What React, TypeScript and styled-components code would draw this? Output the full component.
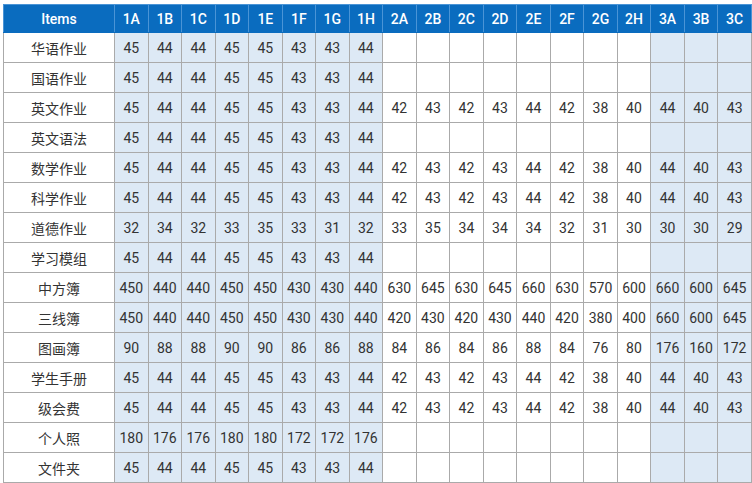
import React from "react";
import styled, { createGlobalStyle } from "styled-components";

const GlobalStyle = createGlobalStyle`
  html, body {
    margin: 0;
    padding: 0;
    background: #ffffff;
  }
  body {
    font-family: Roboto, "Noto Sans CJK SC", sans-serif;
  }
`;

type Row = {
  name: string;
  p1: string[];
  p2?: string[];
  p3?: string[];
};

const classes1 = ["1A", "1B", "1C", "1D", "1E", "1F", "1G", "1H"];
const classes2 = ["2A", "2B", "2C", "2D", "2E", "2F", "2G", "2H"];
const classes3 = ["3A", "3B", "3C"];

const std1 = ["45", "44", "44", "45", "45", "43", "43", "44"];
const std2 = ["42", "43", "42", "43", "44", "42", "38", "40"];
const std3 = ["44", "40", "43"];

const rows: Row[] = [
  { name: "华语作业", p1: std1 },
  { name: "国语作业", p1: std1 },
  { name: "英文作业", p1: std1, p2: std2, p3: std3 },
  { name: "英文语法", p1: std1 },
  { name: "数学作业", p1: std1, p2: std2, p3: std3 },
  { name: "科学作业", p1: std1, p2: std2, p3: std3 },
  {
    name: "道德作业",
    p1: ["32", "34", "32", "33", "35", "33", "31", "32"],
    p2: ["33", "35", "34", "34", "34", "32", "31", "30"],
    p3: ["30", "30", "29"],
  },
  { name: "学习模组", p1: std1 },
  {
    name: "中方簿",
    p1: ["450", "440", "440", "450", "450", "430", "430", "440"],
    p2: ["630", "645", "630", "645", "660", "630", "570", "600"],
    p3: ["660", "600", "645"],
  },
  {
    name: "三线簿",
    p1: ["450", "440", "440", "450", "450", "430", "430", "440"],
    p2: ["420", "430", "420", "430", "440", "420", "380", "400"],
    p3: ["660", "600", "645"],
  },
  {
    name: "图画簿",
    p1: ["90", "88", "88", "90", "90", "86", "86", "88"],
    p2: ["84", "86", "84", "86", "88", "84", "76", "80"],
    p3: ["176", "160", "172"],
  },
  { name: "学生手册", p1: std1, p2: std2, p3: std3 },
  { name: "级会费", p1: std1, p2: std2, p3: std3 },
  {
    name: "个人照",
    p1: ["180", "176", "176", "180", "180", "172", "172", "176"],
  },
  { name: "文件夹", p1: std1 },
];

const blank = (n: number) => Array.from({ length: n }, () => "");

export default function App() {
  return (
    <>
      <GlobalStyle />
      <Page>
        <PriceTable>
          <colgroup>
            <col style={{ width: 111 }} />
            {[...classes1, ...classes2, ...classes3].map((c) => (
              <col key={c} />
            ))}
          </colgroup>
          <thead>
            <tr>
              <HeadCell>Items</HeadCell>
              {[...classes1, ...classes2, ...classes3].map((c) => (
                <HeadCell key={c}>{c}</HeadCell>
              ))}
            </tr>
          </thead>
          <tbody>
            {rows.map((r) => (
              <tr key={r.name}>
                <NameCell>{r.name}</NameCell>
                {r.p1.map((v, i) => (
                  <Cell key={"a" + i} $shade>
                    {v}
                  </Cell>
                ))}
                {(r.p2 || blank(8)).map((v, i) => (
                  <Cell key={"b" + i}>{v}</Cell>
                ))}
                {(r.p3 || blank(3)).map((v, i) => (
                  <Cell key={"c" + i} $shade>
                    {v}
                  </Cell>
                ))}
              </tr>
            ))}
          </tbody>
        </PriceTable>
      </Page>
    </>
  );
}

const Page = styled.div`
  padding: 4px 0 0 3px;
  width: 752px;
  box-sizing: border-box;
`;

const PriceTable = styled.table`
  border-collapse: collapse;
  table-layout: fixed;
  width: 749px;
`;

const HeadCell = styled.th`
  background: #0a6cbf;
  color: #ffffff;
  font-family: Roboto, sans-serif;
  font-weight: 500;
  font-size: 14px;
  height: 27px;
  padding: 0;
  text-align: center;
  border: 1px solid #4a94d6;
  border-bottom-color: #0a6cbf;
`;

const NameCell = styled.td`
  height: 29px;
  padding: 0;
  text-align: center;
  font-family: Roboto, "Noto Sans CJK SC", sans-serif;
  font-size: 14px;
  color: #333333;
  background: #ffffff;
  border: 1px solid #aaaaaa;
`;

const Cell = styled.td<{ $shade?: boolean }>`
  height: 29px;
  padding: 0;
  text-align: center;
  font-family: Roboto, sans-serif;
  font-size: 14px;
  color: #333333;
  background: ${(p) => (p.$shade ? "#dde9f5" : "#ffffff")};
  border: 1px solid #aaaaaa;
`;
